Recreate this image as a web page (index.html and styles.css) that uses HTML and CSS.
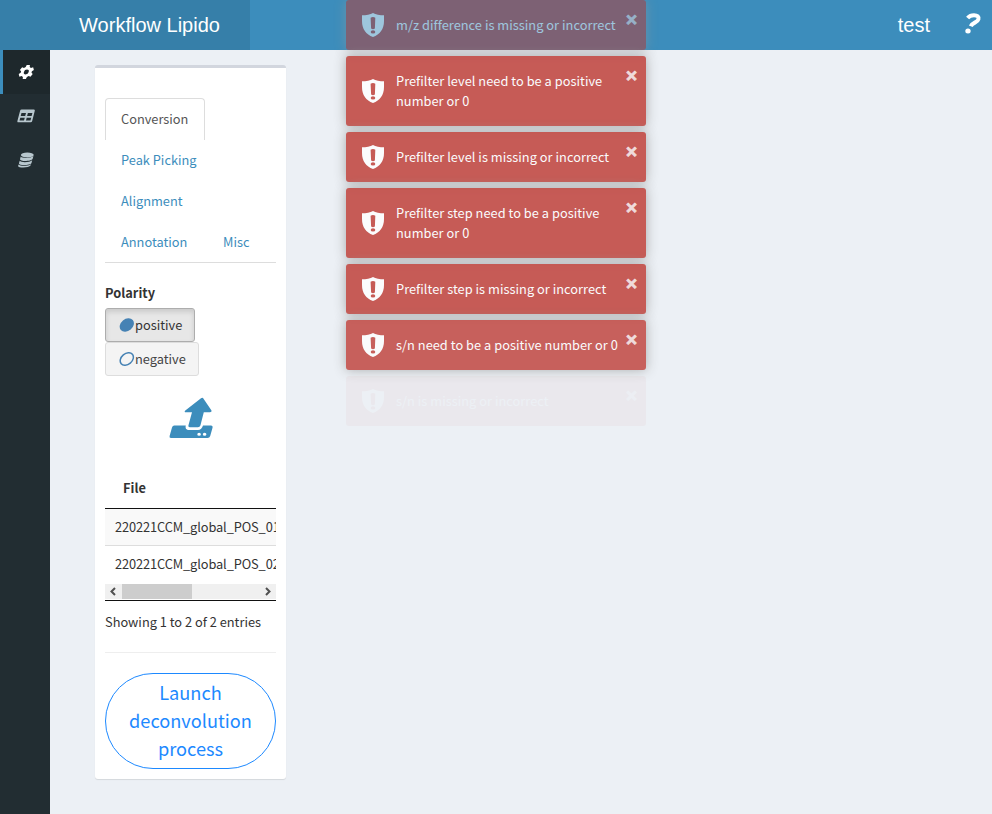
FILE: index.html
```html
<!DOCTYPE html>
<html lang="en">
<head>
<meta charset="utf-8">
<title>Workflow Lipido</title>
<link rel="stylesheet" href="styles.css">
</head>
<body>
<svg class="defs" width="0" height="0">
  <symbol id="shield" viewBox="0 0 22 24"><path fill-rule="evenodd" d="M11 0C8.500 1.700 4 2.300 0 2.300V8c0 8 4 13.500 11 16 7-2.500 11-8 11-16V2.300C18 2.300 13.500 1.700 11 0ZM8.600 4.700Q11 3.100 13.300 4.700L12.900 15.500Q11 17 9.100 15.500ZM8.700 18.900a2.300 1.600 0 1 0 4.600 0a2.300 1.600 0 1 0-4.600 0Z"/></symbol>
</svg>
<header class="header">
  <div class="brand">Workflow Lipido</div>
  <div class="user">test</div>
  <div class="help"><svg width="18" height="21" viewBox="0 0 18 21"><path d="M3.600 5C5.500 2.800 7.500 2.200 10 2.200c3.400 0 5 1.500 4.400 4C13.500 9.800 8.200 9.400 6.800 13.300" fill="none" stroke="#fff" stroke-width="4"/><ellipse cx="4" cy="18" rx="2.700" ry="2.500" fill="#fff"/></svg></div>
</header>
<div class="body">
  <nav class="sidebar">
    <a class="nav active"><svg width="16" height="16" viewBox="0 0 16 16"><g transform="translate(8.300 8) skewX(-16)" fill="currentColor"><path fill-rule="evenodd" d="M-1.600-7H1.600L2-4.900 3.500-4 5.500-4.700 7-2 5.400-.7V.7L7 2 5.500 4.700 3.500 4 2 4.900 1.600 7H-1.600L-2 4.900-3.500 4-5.500 4.700-7 2-5.400.7V-.7L-7-2-5.500-4.700-3.500-4-2-4.900ZM-2.400 0a2.400 2.400 0 1 0 4.800 0a2.400 2.400 0 1 0-4.800 0Z"/></g></svg></a>
    <a class="nav"><svg width="18" height="14" viewBox="0 0 18 14"><path fill="currentColor" fill-rule="evenodd" d="M4.700.5h12q1.400 0 1.100 1.300L15.200 12q-.3 1.300-1.600 1.300H1.500Q.1 13.300.4 12L3.100 1.800Q3.400.5 4.700.5ZM4.500 4.100 3.700 7H8.200L9 4.100ZM10.900 4.100 10.100 7H14.600L15.400 4.100ZM3.300 8.700 2.500 11.400H7L7.800 8.700ZM9.700 8.700 9 11.400H13.500L14.200 8.700Z"/></svg></a>
    <a class="nav"><svg width="18" height="16" viewBox="0 0 18 16"><g fill="currentColor"><ellipse cx="10.300" cy="3" rx="6.400" ry="2.400"/><path d="M3.700 4.600C5 6.700 14 6.500 16.400 4.100L15.700 6.800C14.900 9.300 3.200 10 3 7.300Z"/><path d="M2.700 8.800C4 10.800 12.900 10.600 15.200 8.200L14.500 10.900C13.700 13.400 2.100 14 1.900 11.400Z"/><path d="M1.500 12.600C3 14.500 11.500 14.200 14 12.200L13.500 13.600C12 16.100 1 16.200 1.100 13.900Z"/></g></svg></a>
  </nav>
  <main class="content">
    <section class="card">
      <ul class="tabs">
        <li class="tab current">Conversion</li>
        <li class="tab">Peak Picking</li>
        <li class="tab">Alignment</li>
        <li class="tab">Annotation</li>
        <li class="tab">Misc</li>
      </ul>
      <div class="label">Polarity</div>
      <div class="choices">
        <button class="choice pressed"><svg width="16" height="14" viewBox="0 0 16 14"><ellipse cx="7.800" cy="7" rx="7.800" ry="6" transform="rotate(-40 7.800 7)" fill="#4682b4"/></svg>positive</button>
        <button class="choice"><svg width="16" height="14" viewBox="0 0 16 14"><ellipse cx="7.800" cy="7" rx="7.300" ry="5.400" transform="rotate(-40 7.800 7)" fill="none" stroke="#4682b4" stroke-width="1.500"/></svg>negative</button>
      </div>
      <div class="upload"><svg width="44" height="42" viewBox="0 0 44 42"><path fill="#3c8dbc" d="M34 1 42.500 13.500Q43 15.300 41 15.300H34.800L31.400 28.500Q30.800 30.300 29 30.300H20.700Q19 30.300 19.400 28.500L23 15.300H17Q14.700 15 16.300 13.400L32 1.300Q33.200.3 34 1Z"/><path fill="#3c8dbc" fill-rule="evenodd" d="M5.300 28.500H16.800C16 31.500 17.500 33 20 33H29C31.500 33 33.200 31 34 28.500H42Q44 28.500 43.600 30.500L41.200 39Q40.600 41 38.500 41H2Q0 41 .6 39L3 30.500Q3.600 28.500 5.300 28.500ZM28.300 37.300a1.800 1.500 0 1 0 3.600 0a1.800 1.500 0 1 0-3.600 0ZM33.800 37.300a1.800 1.500 0 1 0 3.600 0a1.800 1.500 0 1 0-3.600 0Z"/></svg></div>
      <div class="table">
        <div class="thead">File</div>
        <div class="row odd">220221CCM_global_POS_01</div>
        <div class="row">220221CCM_global_POS_02</div>
        <div class="scroll">
          <svg width="17" height="15" viewBox="0 0 17 15"><path d="M10 4 6.500 7.500 10 11" fill="none" stroke="#505050" stroke-width="2"/></svg>
          <div class="thumb"></div>
          <svg width="17" height="15" viewBox="0 0 17 15"><path d="M7 4 10.500 7.500 7 11" fill="none" stroke="#505050" stroke-width="2"/></svg>
        </div>
      </div>
      <div class="info">Showing 1 to 2 of 2 entries</div>
      <hr>
      <button class="launch">Launch deconvolution process</button>
    </section>
  </main>
</div>
<div class="toasts">
  <div class="toast leaving"><svg class="shield"><use href="#shield"/></svg><p>m/z difference is missing or incorrect</p><span class="close">×</span></div>
  <div class="toast"><svg class="shield"><use href="#shield"/></svg><p>Prefilter level need to be a positive number or 0</p><span class="close">×</span></div>
  <div class="toast"><svg class="shield"><use href="#shield"/></svg><p>Prefilter level is missing or incorrect</p><span class="close">×</span></div>
  <div class="toast"><svg class="shield"><use href="#shield"/></svg><p>Prefilter step need to be a positive number or 0</p><span class="close">×</span></div>
  <div class="toast"><svg class="shield"><use href="#shield"/></svg><p>Prefilter step is missing or incorrect</p><span class="close">×</span></div>
  <div class="toast settling"><svg class="shield"><use href="#shield"/></svg><p>s/n need to be a positive number or 0</p><span class="close">×</span></div>
  <div class="toast entering"><svg class="shield"><use href="#shield"/></svg><p>s/n is missing or incorrect</p><span class="close">×</span></div>
</div>
</body>
</html>
```
FILE: styles.css
```css
* { box-sizing: border-box; }
body {
  margin: 0;
  height: 814px;
  overflow: hidden;
  display: flex;
  flex-direction: column;
  background: #ecf0f5;
  color: #333;
  font: 12.800px/20px "Noto Sans CJK SC", sans-serif;
}
.defs { position: absolute; }
.header {
  flex: none;
  height: 50px;
  display: flex;
  align-items: center;
  background: #3c8dbc;
  color: #fff;
  font: 20px/50px "Liberation Sans", sans-serif;
}
.brand { width: 250px; padding-left: 49px; background: #367fa9; text-align: center; }
.user { margin-left: auto; }
.help { width: 62px; padding-left: 34px; display: flex; align-items: center; padding-bottom: 3px; }
.body { flex: 1; display: flex; }
.sidebar { width: 50px; background: #222d32; }
.nav {
  height: 44px;
  display: flex;
  align-items: center;
  justify-content: center;
  padding-right: 1px;
  border-left: 3px solid transparent;
  color: #b8c7ce;
}
.nav.active { background: #1e282c; border-color: #3c8dbc; color: #fff; }
.content { padding: 15px 45px; }
.card {
  width: 191px;
  height: 714px;
  padding: 30px 10px 10px;
  background: #fff;
  border-top: 3px solid #d2d6de;
  border-radius: 3px;
  box-shadow: 0 1px 1px rgba(0,0,0,.1);
}
.tabs {
  display: flex;
  flex-wrap: wrap;
  margin: 0;
  padding: 0;
  list-style: none;
  border-bottom: 1px solid #ddd;
}
.tab {
  height: 41px;
  padding: 10px 15px;
  margin-right: 2px;
  border: 1px solid transparent;
  color: #3c8dbc;
}
.tab.current {
  width: 100px;
  height: 42px;
  margin-right: 60px;
  margin-bottom: -1px;
  border-color: #ddd;
  border-bottom: 0;
  border-radius: 4px 4px 0 0;
  color: #555;
}
.tab:nth-child(4) { width: 100px; }
.label { margin: 20px 0 5px; font-weight: 700; }
.choices { display: flex; flex-direction: column; align-items: flex-start; }
.choice {
  width: 94px;
  height: 34px;
  display: flex;
  align-items: center;
  padding: 0 0 0 13px;
  border: 1px solid #ddd;
  border-radius: 3px;
  background: #f4f4f4;
  color: #444;
  font: inherit;
}
.choice.pressed { width: 90px; background: #e7e7e7; border-color: #adadad; color: #333; box-shadow: inset 0 3px 5px rgba(0,0,0,.125); }
.upload { height: 93px; padding: 21px 0 0 63.500px; }
.table { width: 171px; overflow: hidden; border-bottom: 1px solid #111; }
.thead { height: 40px; padding: 9px 18px; border-bottom: 1px solid #111; font-weight: 700; }
.row { height: 38px; padding: 8px 10px; white-space: nowrap; letter-spacing: -.1px; border-top: 1px solid #ddd; }
.row.odd { height: 36px; background: #f9f9f9; border-top: 0; }
.scroll { display: flex; height: 15px; margin: 1px 0; background: #f0f0f0; }
.thumb { width: 70px; margin-right: auto; background: #cdcdcd; }
.info { margin-top: 11px; }
hr { margin: 20px 0; border: 0; border-top: 1px solid #eee; }
.launch {
  width: 171px;
  height: 96px;
  padding: 0 20px 2px;
  border: 1px solid #1d89ff;
  border-radius: 50px;
  background: #fff;
  color: #1d89ff;
  font: 18.200px/28px "Noto Sans CJK SC", sans-serif;
}
.toasts {
  position: absolute;
  left: 346px;
  top: 0;
  width: 300px;
  display: flex;
  flex-direction: column;
  gap: 6px;
}
.toast {
  position: relative;
  display: flex;
  align-items: center;
  padding: 15px 11px 15px 16px;
  border-radius: 3px;
  background: #bd362f;
  color: #fff;
  box-shadow: 0 0 12px #999;
  opacity: .8;
}
.toast p { flex: 1; margin: 0 0 0 12px; padding-right: 12px; letter-spacing: .03px; }
.shield { flex: none; width: 22px; height: 24px; margin: -2px 0; fill: #fff; }
.close { position: absolute; right: 9px; top: 10px; font: bold 19px/20px "Liberation Sans", sans-serif; -webkit-text-stroke: .8px #fff; opacity: .8; }
.leaving { opacity: .5; }
.settling { opacity: .77; }
.entering { opacity: .035; box-shadow: none; }
```
